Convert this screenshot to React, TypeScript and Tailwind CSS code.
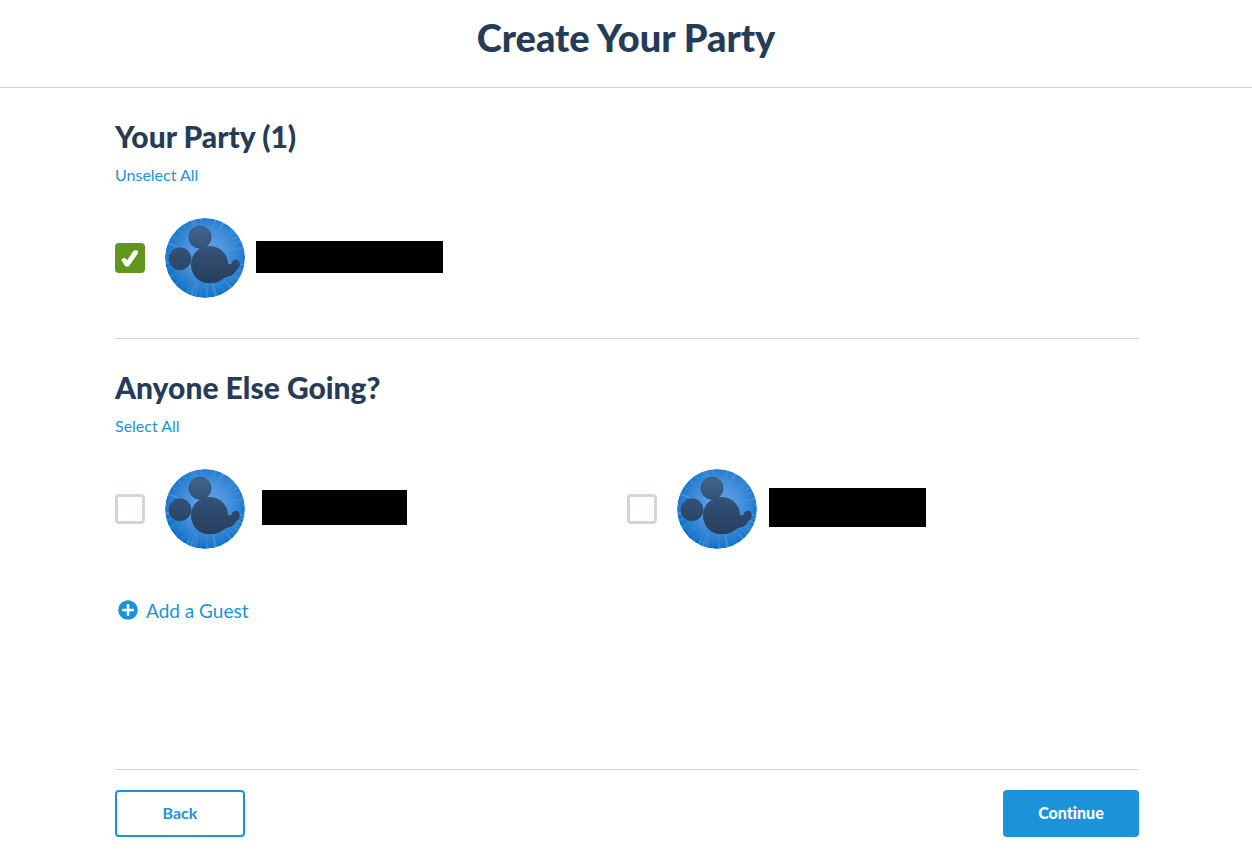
import { useState } from 'react';

type Guest = {
  id: string;
  label: string;
  nameBar: string;
};

const party: Guest[] = [
  { id: 'guest-1', label: 'Guest 1', nameBar: 'ml-[11px] h-8 w-[187px]' },
];

const others: Guest[] = [
  { id: 'guest-2', label: 'Guest 2', nameBar: 'ml-[17px] h-[35px] w-[145px]' },
  { id: 'guest-3', label: 'Guest 3', nameBar: 'ml-3 h-[39px] w-[157px]' },
];

// light rays behind the avatar silhouette
const rays = Array.from({ length: 44 }, (_, i) => {
  const angle = (i / 44) * Math.PI * 2 + Math.sin(i * 7) * 0.12;
  const spread = 0.01 + 0.035 * Math.abs(Math.sin(i * 3.7));
  const start = 18 + 12 * Math.abs(Math.cos(i * 2.3));
  const x = (r: number, a: number) => (40 + r * Math.cos(a)).toFixed(2);
  const y = (r: number, a: number) => (38 + r * Math.sin(a)).toFixed(2);
  return {
    points: `${x(start, angle)},${y(start, angle)} ${x(46, angle - spread)},${y(46, angle - spread)} ${x(46, angle + spread)},${y(46, angle + spread)}`,
    opacity: 0.08 + 0.24 * Math.abs(Math.sin(i * 5.1)),
  };
});

const Avatar = ({ id }: { id: string }) => (
  <svg
    viewBox="0 0 80 80"
    className="ml-5 size-20 shrink-0 rounded-full"
    aria-hidden="true"
  >
    <defs>
      <radialGradient
        id={`${id}-sky`}
        gradientUnits="userSpaceOnUse"
        cx="42"
        cy="36"
        r="46"
      >
        <stop offset="0" stopColor="#64a8ec" />
        <stop offset="0.5" stopColor="#4590dc" />
        <stop offset="0.85" stopColor="#1c78ca" />
        <stop offset="1" stopColor="#106fc0" />
      </radialGradient>
      <linearGradient
        id={`${id}-shape`}
        gradientUnits="userSpaceOnUse"
        x1="0"
        y1="8"
        x2="0"
        y2="66"
      >
        <stop offset="0" stopColor="#42658f" />
        <stop offset="0.5" stopColor="#304d71" />
        <stop offset="1" stopColor="#263e5c" />
      </linearGradient>
    </defs>
    <circle cx="40" cy="40" r="40" fill={`url(#${id}-sky)`} />
    {rays.map((ray, i) => (
      <polygon
        key={i}
        points={ray.points}
        fill="#7fbcf2"
        opacity={ray.opacity}
      />
    ))}
    <g fill={`url(#${id}-shape)`}>
      <circle cx="35" cy="19.3" r="11" stroke="#2a4769" strokeWidth="0.7" />
      <circle cx="15" cy="40.8" r="11" stroke="#2a4769" strokeWidth="0.7" />
      <path d="M44.5 28C55 28 62.5 36 63 45C63 46 63.2 46.3 64 46.3C65.2 46.3 66.2 46.2 66.7 45.4C67 43.1 68.7 41.8 70.8 41.8C73.4 41.8 75 44 74.8 46.6C74.6 49.3 73.2 50.6 71.8 51.8C70.3 53.6 69.2 56 66.5 57.4C63.5 58.8 61 58.6 58.5 60.5C54.5 63.8 50 65.3 44.5 65.3C34 65.3 26 57 26 46.7C26 36.3 34 28 44.5 28Z" />
    </g>
  </svg>
);

type GuestRowProps = {
  guest: Guest;
  checked: boolean;
  onToggle: (id: string) => void;
};

const GuestRow = ({ guest, checked, onToggle }: GuestRowProps) => (
  <label htmlFor={guest.id} className="flex h-20 cursor-pointer items-center">
    <span className="relative size-[30px] shrink-0">
      <input
        id={guest.id}
        type="checkbox"
        aria-label={guest.label}
        checked={checked}
        onChange={() => onToggle(guest.id)}
        className="block size-full cursor-pointer appearance-none rounded-sm border-3 border-[#ced5de] bg-white checked:border-[#5f961b] checked:bg-[#5f961b]"
      />
      {checked && (
        <svg
          viewBox="0 0 30 30"
          className="pointer-events-none absolute inset-0"
          fill="#fff"
          stroke="#fff"
          strokeWidth="1.6"
          strokeLinejoin="round"
        >
          <path d="M7.2 17L9.4 15.6L12.3 18.4L19.2 8.2L22.2 8.4L22 10.4L13.4 22.6L11 22.8Z" />
        </svg>
      )}
    </span>
    <Avatar id={guest.id} />
    <span className={`mb-[3px] bg-black ${guest.nameBar}`} />
  </label>
);

const App = () => {
  const [selected, setSelected] = useState<string[]>(['guest-1']);

  const toggle = (id: string) =>
    setSelected((prev) =>
      prev.includes(id) ? prev.filter((v) => v !== id) : [...prev, id],
    );

  const unselectAll = () =>
    setSelected((prev) => prev.filter((id) => !party.some((g) => g.id === id)));

  const selectAll = () =>
    setSelected((prev) => [
      ...new Set([...prev, ...others.map((guest) => guest.id)]),
    ]);

  return (
    <div className="min-h-screen bg-white font-['Lato',sans-serif] text-[#253b56] [font-variant-ligatures:none]">
      <header className="border-b border-[#d0d3dc] pt-[15px] pb-7 text-center">
        <h1 className="text-[38px] leading-11 font-black">Create Your Party</h1>
      </header>

      <div className="pl-0.5">
        <main className="mx-auto w-full max-w-5xl">
          <section className="border-b border-[#d0d5dc] pt-8 pb-10">
            <h2 className="text-3xl leading-8 font-black">Your Party (1)</h2>
            <button
              type="button"
              onClick={unselectAll}
              className="mt-3 mb-8 block cursor-pointer text-base leading-[22px] text-[#1b93d9]"
            >
              Unselect All
            </button>
            {party.map((guest) => (
              <GuestRow
                key={guest.id}
                guest={guest}
                checked={selected.includes(guest.id)}
                onToggle={toggle}
              />
            ))}
          </section>

          <section className="border-b border-[#d0d5dc] pt-8 pb-36">
            <h2 className="text-3xl leading-8 font-black">
              Anyone Else Going?
            </h2>
            <button
              type="button"
              onClick={selectAll}
              className="mt-3 mb-8 block cursor-pointer text-base leading-[22px] text-[#1b93d9]"
            >
              Select All
            </button>
            <div className="grid grid-cols-2">
              {others.map((guest) => (
                <GuestRow
                  key={guest.id}
                  guest={guest}
                  checked={selected.includes(guest.id)}
                  onToggle={toggle}
                />
              ))}
            </div>
            <button
              type="button"
              className="mt-12 ml-[3px] flex cursor-pointer items-center gap-2 text-[19px] leading-7 text-[#1b93d9]"
            >
              <svg
                viewBox="0 0 20 20"
                className="mb-[3px] size-5"
                aria-hidden="true"
              >
                <circle cx="10" cy="10" r="9.8" fill="#1b93d9" />
                <path
                  d="M10 5.2V14.8M5.2 10H14.8"
                  stroke="#fff"
                  strokeWidth="2.6"
                  strokeLinecap="round"
                />
              </svg>
              Add a Guest
            </button>
          </section>

          <footer className="flex items-center justify-between py-5">
            <button
              type="button"
              className="h-[47px] w-[130px] cursor-pointer rounded-sm border-2 border-[#1b93d9] pb-0.5 text-base font-bold text-[#1b93d9]"
            >
              Back
            </button>
            <button
              type="button"
              className="h-[47px] w-[136px] cursor-pointer rounded-sm bg-[#1b93d9] pb-0.5 text-base font-black text-white"
            >
              Continue
            </button>
          </footer>
        </main>
      </div>
    </div>
  );
};

export default App;
